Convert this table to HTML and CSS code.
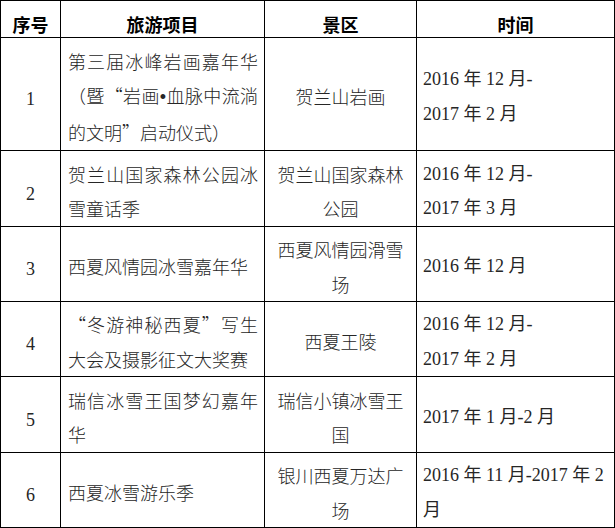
FILE: index.html
```html
<!DOCTYPE html>
<html lang="zh-CN">
<head>
<meta charset="utf-8">
<title>旅游项目</title>
<link rel="stylesheet" href="styles.css">
</head>
<body>
<table class="schedule">
  <colgroup>
    <col class="c-no">
    <col class="c-item">
    <col class="c-site">
    <col class="c-time">
  </colgroup>
  <thead>
    <tr class="head">
      <th>序号</th>
      <th>旅游项目</th>
      <th>景区</th>
      <th>时间</th>
    </tr>
  </thead>
  <tbody>
    <tr class="h113">
      <td class="no">1</td>
      <td class="item">第三届冰峰岩画嘉年华（暨“岩画<span class="dot">•</span>血脉中流淌的文明”启动仪式）</td>
      <td class="site">贺兰山岩画</td>
      <td class="time">2016 年 12 月-<br>2017 年 2 月</td>
    </tr>
    <tr class="h76">
      <td class="no">2</td>
      <td class="item">贺兰山国家森林公园冰雪童话季</td>
      <td class="site">贺兰山国家森林公园</td>
      <td class="time">2016 年 12 月-<br>2017 年 3 月</td>
    </tr>
    <tr class="h75">
      <td class="no">3</td>
      <td class="item">西夏风情园冰雪嘉年华</td>
      <td class="site">西夏风情园滑雪场</td>
      <td class="time">2016 年 12 月</td>
    </tr>
    <tr class="h75">
      <td class="no">4</td>
      <td class="item">“冬游神秘西夏”写生大会及摄影征文大奖赛</td>
      <td class="site">西夏王陵</td>
      <td class="time">2016 年 12 月-<br>2017 年 2 月</td>
    </tr>
    <tr class="h76">
      <td class="no">5</td>
      <td class="item">瑞信冰雪王国梦幻嘉年华</td>
      <td class="site">瑞信小镇冰雪王国</td>
      <td class="time">2017 年 1 月-2 月</td>
    </tr>
    <tr class="h75">
      <td class="no">6</td>
      <td class="item">西夏冰雪游乐季</td>
      <td class="site">银川西夏万达广场</td>
      <td class="time">2016 年 11 月-2017 年 2 月</td>
    </tr>
  </tbody>
</table>
</body>
</html>
```
FILE: styles.css
```css
html, body {
  margin: 0;
  padding: 0;
  background: #fff;
}

.schedule {
  border-collapse: separate;
  border-spacing: 0;
  table-layout: fixed;
  width: 615px;
  border-top: 1px solid #000;
  border-left: 1px solid #000;
  font-family: "Noto Sans CJK SC", sans-serif;
  font-size: 18px;
  font-weight: 300;
  color: #262626;
}

.c-no { width: 60px; }
.c-item { width: 204px; }
.c-site { width: 152px; }
.c-time { width: 198px; }

.schedule th,
.schedule td {
  border-right: 1px solid #000;
  border-bottom: 1px solid #000;
  padding: 5px 6px 0 7px;
  line-height: 34.5px;
  vertical-align: middle;
}

.schedule th {
  font-weight: 700;
  text-align: center;
  padding: 10px 0 0;
  line-height: 26px;
  color: #000;
}

.head { height: 37px; }
.h113 { height: 113px; }
.h76 { height: 76px; }
.h75 { height: 75px; }

.schedule .no {
  text-align: center;
  font-family: "Liberation Serif", serif;
  font-weight: 400;
  padding: 11px 0 0;
}

.item {
  text-align: justify;
  text-spacing-trim: space-all;
}

.dot {
  font-family: "Liberation Sans", sans-serif;
}

.schedule .site {
  text-align: center;
  padding: 5px 7px 0;
}

.schedule .time {
  font-family: "Liberation Serif", "Noto Sans CJK SC", serif;
  font-weight: 400;
  padding: 5px 4px 0 6px;
}
```
